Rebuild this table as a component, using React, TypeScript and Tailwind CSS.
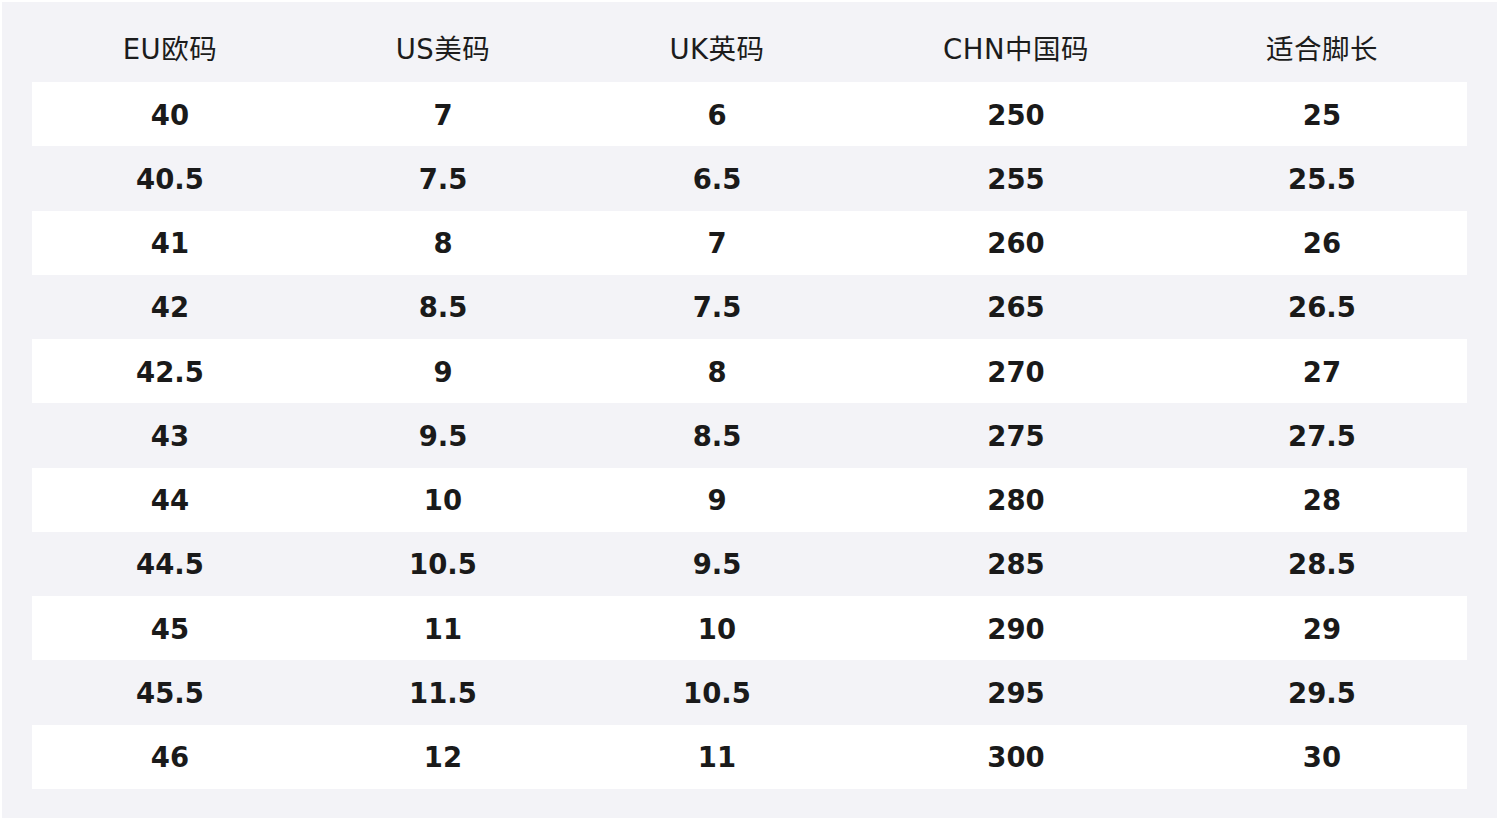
import React from "react";

const headers = ["EU欧码", "US美码", "UK英码", "CHN中国码", "适合脚长"];

const sizes: string[][] = [
  ["40", "7", "6", "250", "25"],
  ["40.5", "7.5", "6.5", "255", "25.5"],
  ["41", "8", "7", "260", "26"],
  ["42", "8.5", "7.5", "265", "26.5"],
  ["42.5", "9", "8", "270", "27"],
  ["43", "9.5", "8.5", "275", "27.5"],
  ["44", "10", "9", "280", "28"],
  ["44.5", "10.5", "9.5", "285", "28.5"],
  ["45", "11", "10", "290", "29"],
  ["45.5", "11.5", "10.5", "295", "29.5"],
  ["46", "12", "11", "300", "30"],
];

const cols = "grid grid-cols-[276px_270px_278px_320px_292px]";

const App = () => {
  return (
    <div
      className="w-[1500px] h-[822px] bg-white p-[2px]"
      style={{ fontFamily: '"DejaVu Sans", "Noto Sans CJK SC", sans-serif' }}
    >
      <div className="h-[816px] w-[1495px] bg-[#f3f3f7] px-[30px] pb-[29px]">
        <div className={`${cols} h-[80px] items-center pt-[16px] text-[27.5px] text-[#1c1c1c]`}>
          {headers.map((h) => (
            <div key={h} className="text-center tracking-[0.5px]">
              {h}
            </div>
          ))}
        </div>
        {sizes.map((row, index) => (
          <div
            key={index}
            className={`${cols} h-[64.27px] items-center text-[27.5px] font-bold text-[#1a1a1a] ${
              index % 2 === 0 ? "bg-white" : "bg-[#f3f3f7]"
            }`}
          >
            {row.map((v, i) => (
              <div key={i} className="text-center pt-[2px]">
                {v}
              </div>
            ))}
          </div>
        ))}
      </div>
    </div>
  );
};

export default App;
